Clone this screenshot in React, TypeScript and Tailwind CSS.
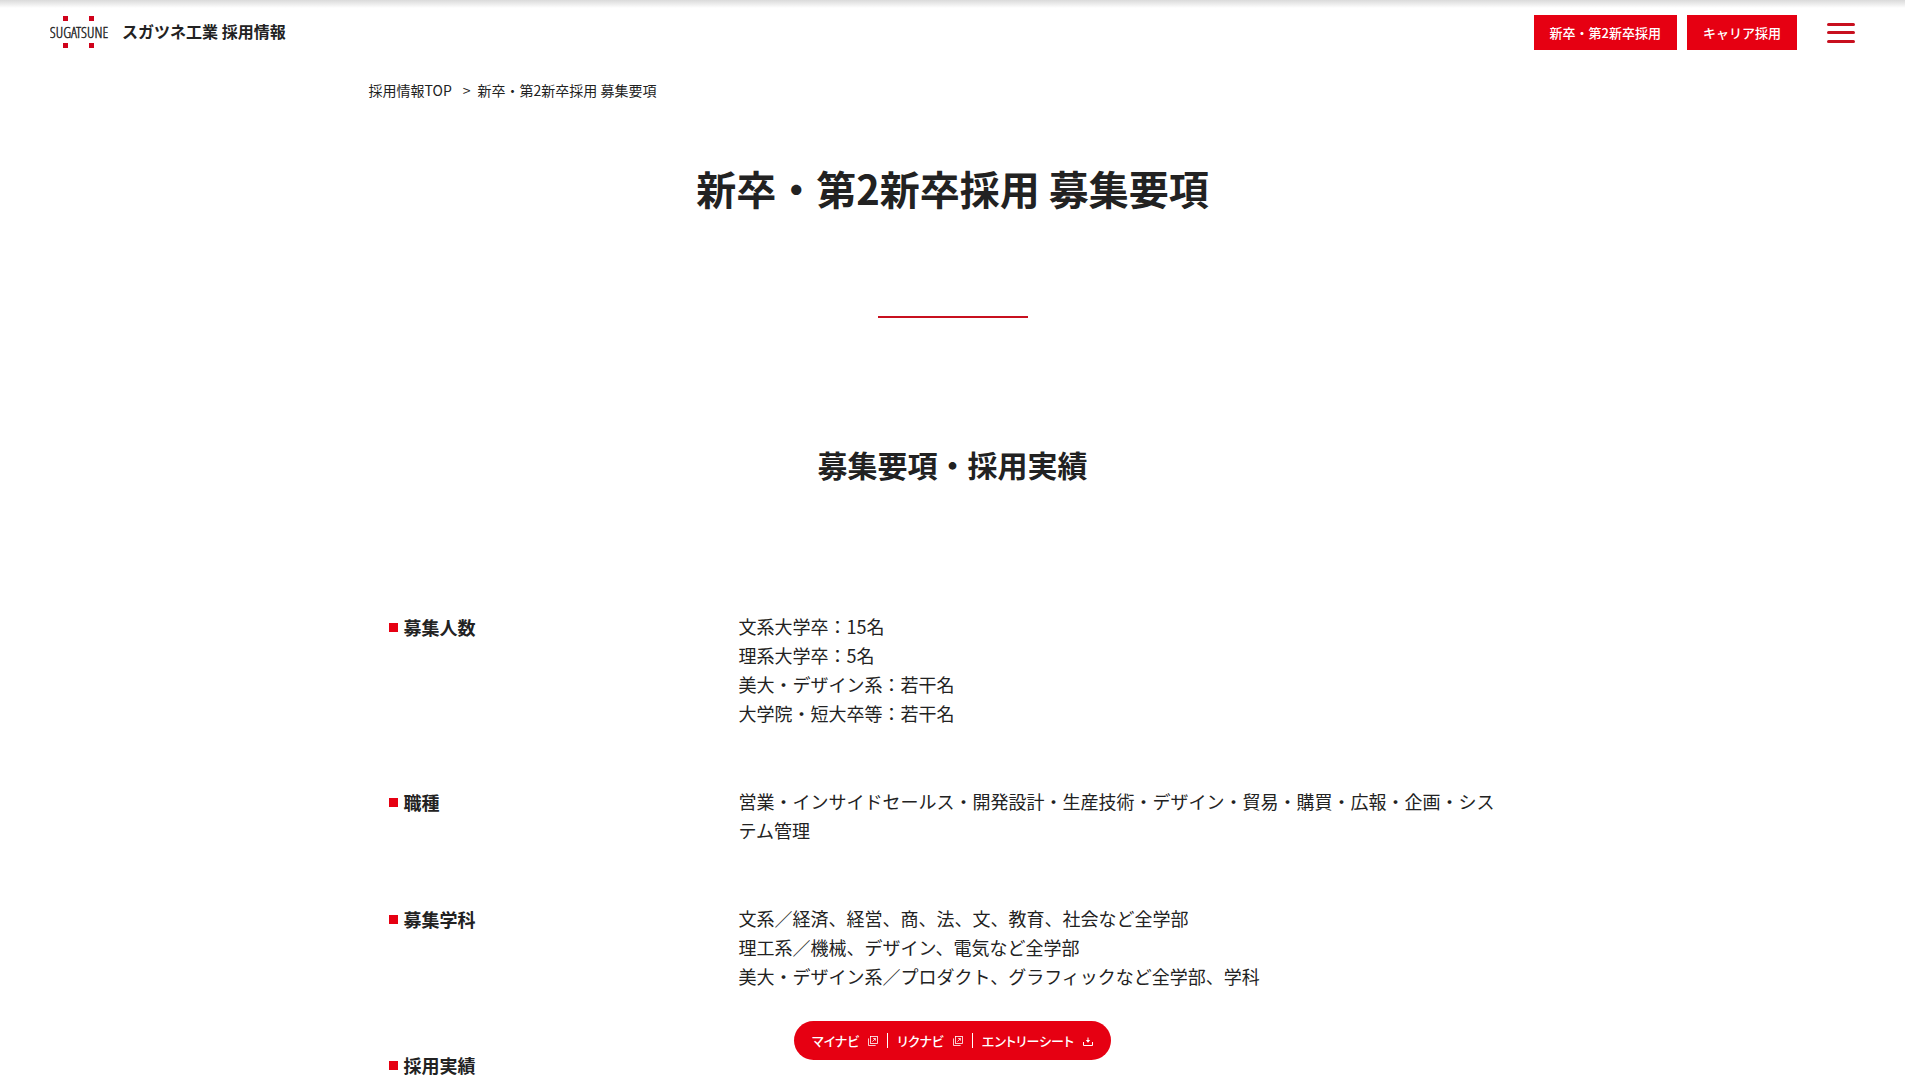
const ENTRIES = [
  {
    term: "募集人数",
    lines: ["文系大学卒：15名", "理系大学卒：5名", "美大・デザイン系：若干名", "大学院・短大卒等：若干名"],
  },
  {
    term: "職種",
    lines: [
      "営業・インサイドセールス・開発設計・生産技術・デザイン・貿易・購買・広報・企画・システム管理",
    ],
  },
  {
    term: "募集学科",
    lines: [
      "文系／経済、経営、商、法、文、教育、社会など全学部",
      "理工系／機械、デザイン、電気など全学部",
      "美大・デザイン系／プロダクト、グラフィックなど全学部、学科",
    ],
  },
  { term: "採用実績", lines: [] },
];

function Logo() {
  return (
    <svg width="60" height="32" viewBox="0 0 60 32" role="img" aria-label="SUGATSUNE">
      <g fill="#d0021b">
        <rect x="13" y="0" width="5" height="5" />
        <rect x="39" y="0" width="5" height="5" />
        <rect x="13" y="27" width="5" height="5" />
        <rect x="39" y="27" width="5" height="5" />
      </g>
      <text
        x="29"
        y="22"
        textAnchor="middle"
        fill="#222222"
        stroke="#222222"
        strokeWidth="0.4"
        className="font-['Open_Sans_Condensed_Light','Open_Sans_Condensed',sans-serif] text-[15px] font-light"
      >
        SUGATSUNE
      </text>
    </svg>
  );
}

function ExternalIcon() {
  return (
    <svg width="10" height="10" viewBox="0 0 10 10" fill="none" stroke="#ffffff" strokeWidth="0.8" aria-hidden="true">
      <rect x="2.5" y="0.5" width="7" height="7" />
      <path d="M0.5 2.4v7.1h7.1" />
      <path d="M4.4 5.6l3-3M5.2 2.5h2.2v2.2" />
    </svg>
  );
}

function DownloadIcon() {
  return (
    <svg width="10" height="10" viewBox="0 0 10 10" fill="none" stroke="#ffffff" aria-hidden="true">
      <path d="M0.5 6v3.5h9V6" />
      <path d="M5 1.5v4" />
      <path d="M2.8 4h4.4L5 6.8z" fill="#ffffff" stroke="none" />
    </svg>
  );
}

function Header() {
  return (
    <header className="bg-white">
      <div className="h-2 bg-linear-to-b from-[#dadada] to-white" />
      <div className="flex items-start justify-between px-[50px] pt-[7px]">
        <a href="#" className="flex items-start gap-3 pt-px">
          <Logo />
          <span className="text-base leading-[30px] font-bold">スガツネ工業 採用情報</span>
        </a>
        <div className="flex items-center gap-[30px]">
          <nav className="flex gap-[10px] text-[13px] leading-[35px] font-medium text-white">
            <a href="#" className="bg-[#e60012] px-4">
              新卒・第2新卒採用
            </a>
            <a href="#" className="bg-[#e60012] px-4">
              キャリア採用
            </a>
          </nav>
          <button type="button" aria-label="メニュー" className="flex h-5 w-7 flex-col justify-between">
            <span className="h-[3px] w-full rounded-full bg-[#c8101f]" />
            <span className="h-[3px] w-full rounded-full bg-[#c8101f]" />
            <span className="h-[3px] w-full rounded-full bg-[#c8101f]" />
          </button>
        </div>
      </div>
    </header>
  );
}

function EntryBar() {
  return (
    <div className="fixed inset-x-0 bottom-5 flex justify-center pr-[15px]">
      <nav className="flex h-[39px] items-center gap-[9px] rounded-full bg-[#e60012] px-[18px] text-[13px] font-medium text-white [font-feature-settings:'palt']">
        <a href="#" className="flex items-center gap-[9px]">
          マイナビ
          <ExternalIcon />
        </a>
        <span className="h-[15px] w-px bg-white" />
        <a href="#" className="flex items-center gap-[9px]">
          リクナビ
          <ExternalIcon />
        </a>
        <span className="h-[15px] w-px bg-white" />
        <a href="#" className="flex items-center gap-[9px]">
          エントリーシート
          <DownloadIcon />
        </a>
      </nav>
    </div>
  );
}

export default function App() {
  return (
    <div
      lang="ja"
      className="h-screen overflow-hidden bg-white pr-[15px] font-['Noto_Sans_CJK_JP',sans-serif] text-[#222222]"
    >
      <Header />
      <main className="mx-auto max-w-[1168px]">
        <nav className="flex pt-[30px] text-sm leading-5">
          <a href="#">採用情報TOP</a>
          <span className="mr-[7px] ml-[11px]">&gt;</span>
          <span>新卒・第2新卒採用 募集要項</span>
        </nav>
        <h1 className="pt-[58px] text-center text-[40px] leading-[60px] font-bold">新卒・第2新卒採用 募集要項</h1>
        <div className="mx-auto mt-[98px] h-[2px] w-[150px] bg-[#c8101f]" />
        <h2 className="pt-[124px] text-center text-[30px] leading-[44px] font-bold">募集要項・採用実績</h2>
        <dl className="flex flex-col gap-[59px] px-5 pt-[126px] text-lg leading-[29px]">
          {ENTRIES.map((e) => (
            <div key={e.term} className="flex">
              <dt className="flex w-[350px] shrink-0 items-center gap-[6px] self-start leading-[31px] font-bold">
                <span className="size-[9px] bg-[#e60012]" />
                {e.term}
              </dt>
              <dd className="max-w-[772px]">
                {e.lines.map((line) => (
                  <p key={line}>{line}</p>
                ))}
              </dd>
            </div>
          ))}
        </dl>
      </main>
      <EntryBar />
    </div>
  );
}
